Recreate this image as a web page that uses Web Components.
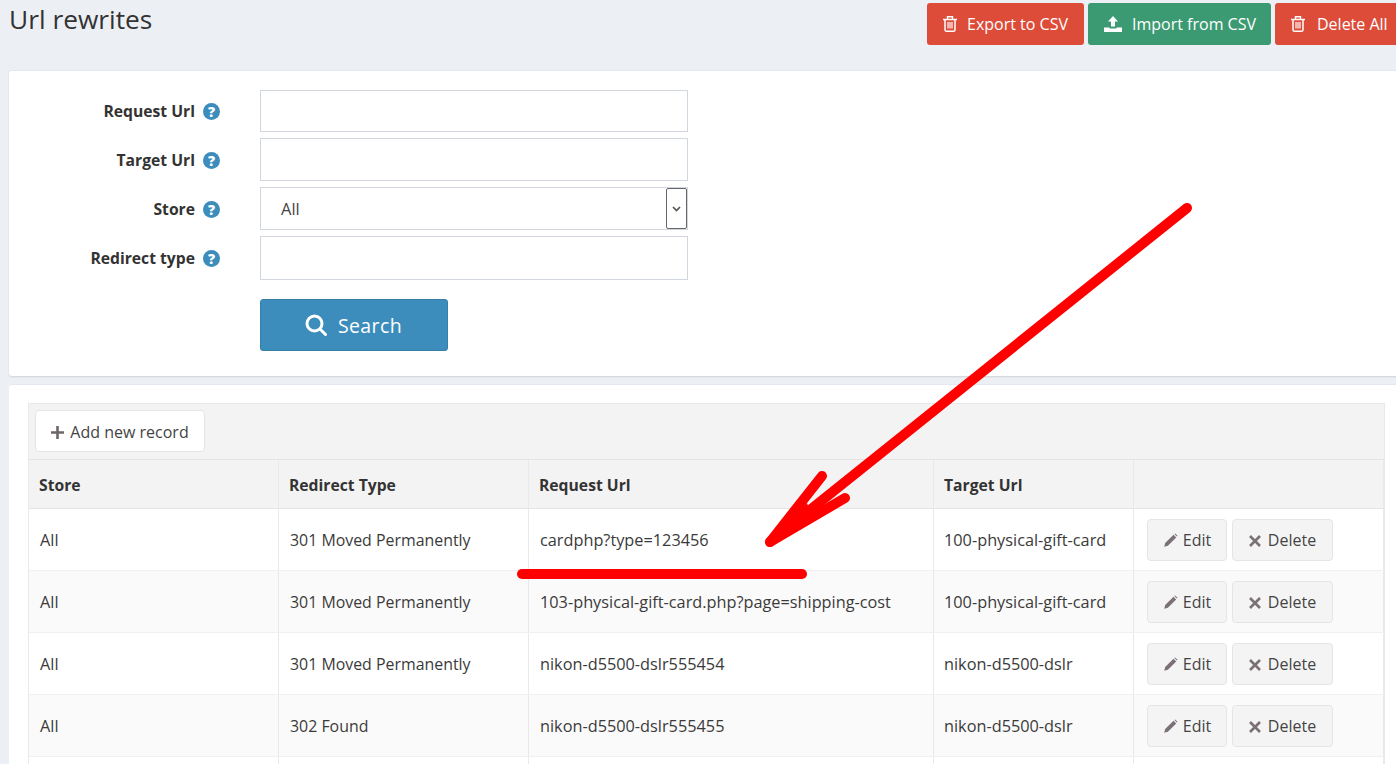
<!DOCTYPE html>
<html><head><meta charset="utf-8"><title>Url rewrites</title>
<style>
html,body{margin:0;height:764px;overflow:hidden;background:#ecf0f5}
body{font-family:"Open Sans","Liberation Sans",sans-serif;color:#333;position:relative}
</style></head><body>
<url-page>
  <page-header slot="header" title="Url rewrites">
    <ui-btn color="#dd4b39" icon="trash" style="width:157px">Export to CSV</ui-btn>
    <ui-btn color="#3c9a72" icon="upload" style="width:183px">Import from CSV</ui-btn>
    <ui-btn color="#dd4b39" icon="trash" style="width:129px;--gap:12px">Delete All</ui-btn>
  </page-header>
  <search-panel slot="search"></search-panel>
  <data-grid slot="grid"></data-grid>
</url-page>
<red-annotation></red-annotation>
<script>
const ICONS={
 trash:'<svg width="14" height="16" viewBox="0 0 14 16" fill="none" stroke="currentColor"><path d="M0 3.500h14" stroke-width="1.500"/><path d="M4.500 3V.8h5V3" stroke-width="1.400"/><path d="M2 3.500v10.300c0 .8.500 1.400 1.100 1.400h7.800c.6 0 1.100-.6 1.100-1.400V3.500" stroke-width="1.500"/><path d="M5 6v6.500M7 6v6.500M9 6v6.500" stroke-width="1.200"/></svg>',
 upload:'<svg width="18" height="16" viewBox="0 0 18 16" fill="currentColor"><path d="M9 0l5 5.500h-3v5H7v-5H4z"/><path d="M0 11.500h5.500v1h7v-1H18V16H0z"/></svg>',
 search:'<svg width="22" height="22" viewBox="0 0 22 22" fill="none" stroke="currentColor" stroke-width="3"><circle cx="9.500" cy="9.500" r="7.500"/><path d="M15 15l5.500 5.500" stroke-linecap="round"/></svg>',
 plus:'<svg width="13" height="13" viewBox="0 0 13 13" fill="currentColor"><path d="M5.200 0h2.600v5.200H13v2.600H7.800V13H5.200V7.800H0V5.200h5.200z"/></svg>',
 pencil:'<svg width="15" height="15" viewBox="0 0 15 15" fill="currentColor" style="margin-top:2px"><path d="M10.500 1.800l2.700 2.700-8.300 8.300-3.700 1 1-3.700z"/><path d="M11.400 1l.8-.5 2.300 2.300-.6.800z"/></svg>',
 x:'<svg width="12" height="12" viewBox="0 0 12 12" fill="none" stroke="currentColor" stroke-width="2.600" style="margin-top:2px"><path d="M1 1l10 10M11 1L1 11"/></svg>'
};
function def(name,css,html){
  customElements.define(name,class extends HTMLElement{
    connectedCallback(){
      if(this.shadowRoot)return;
      const r=this.attachShadow({mode:'open'});
      r.innerHTML='<style>'+css+'</style>'+(typeof html==='function'?html(this):html);
    }
  });
}
def('url-page',
 `:host{display:block;width:1395px;margin-left:9px}
  .stack{display:flex;flex-direction:column}`,
 `<div class="stack"><slot name="header"></slot><slot name="search"></slot><slot name="grid"></slot></div>`);
def('page-header',
 `:host{display:flex;height:70px;justify-content:space-between;align-items:flex-start}
  h1{margin:0;font-size:26.300px;font-weight:400;line-height:38px;color:#333}
  .b{display:flex;gap:4px;padding-top:3px}`,
 h=>`<h1>${h.getAttribute('title')}</h1><div class="b"><slot></slot></div>`);
def('ui-btn',
 `:host{display:flex;box-sizing:border-box;height:42px;align-items:center;border-radius:3px;color:#fff;font-size:16px;padding:0 15px 0 16px;gap:var(--gap,10px);white-space:nowrap}
  svg{display:block}`,
 h=>{h.style.background=h.getAttribute('color');return ICONS[h.getAttribute('icon')]+'<slot></slot>'});
def('form-row',
 `:host{display:grid;grid-template-columns:211px 1fr;column-gap:40px;align-items:center}
  .l{display:flex;justify-content:flex-end;align-items:center;gap:8px;font-weight:700;font-size:15.700px;color:#333;padding-top:var(--lp,1px)}
  .l span:first-child{margin-top:-1px}
  .q{width:17px;height:17px;border-radius:50%;background:#3c8dbc;color:#fff;font:800 14px/17px "Open Sans",sans-serif;text-align:center}`,
 h=>`<div class="l"><span>${h.getAttribute('label')}</span><span class="q">?</span></div><div><slot></slot></div>`);
def('text-box',
 `:host{display:block;box-sizing:border-box;width:428px;background:#fff;border:1px solid #d2d6de}`,'');
def('select-box',
 `:host{display:flex;box-sizing:border-box;width:428px;height:43px;background:#fff;border:1px solid #d2d6de;align-items:center;justify-content:space-between;font-size:16.500px;color:#444;padding-left:20px}
  .t{margin-top:-1px}
  .c{box-sizing:border-box;width:21px;height:41px;border:1px solid #666;border-radius:2px;display:flex;align-items:center;justify-content:center;color:#555}`,
 `<span class="t">All</span><span class="c"><svg width="9" height="6" viewBox="0 0 9 6" fill="none" stroke="currentColor" stroke-width="1.700"><path d="M1 1l3.500 3.500L8 1"/></svg></span>`);
def('search-panel',
 `:host{display:block;box-sizing:border-box;height:306px;background:#fff;border-radius:3px;border-top:1px solid #e4e8f0;box-shadow:0 1px 2px rgba(0,0,0,.12);padding-top:19px}
  .f{display:flex;flex-direction:column}
  .go{display:flex;box-sizing:border-box;width:188px;height:52px;margin:19px 0 0 251px;background:#3c8dbc;border:1px solid #367fa9;border-radius:3px;color:#fff;align-items:center;justify-content:center;gap:11px;font-size:19.500px;letter-spacing:.4px;padding-right:1px}
  svg{display:block}`,
 `<div class="f">
   <form-row label="Request Url" style="--lp:0px"><text-box style="height:42px"></text-box></form-row>
   <form-row label="Target Url" style="margin-top:6px"><text-box style="height:43px"></text-box></form-row>
   <form-row label="Store" style="margin-top:6px"><select-box></select-box></form-row>
   <form-row label="Redirect type" style="margin-top:6px;--lp:0px"><text-box style="height:44px"></text-box></form-row>
   <div class="go">${ICONS.search}<span>Search</span></div>
 </div>`);
def('grid-row',
 `:host{display:grid;grid-template-columns:250px 250px 405px 200px 1fr;border-bottom:1px solid #f0f0f0;box-sizing:border-box;height:62px;font-size:16.300px;color:#3a3a3a;background:var(--bg,#fff)}
  :host([head]){height:49px;--bg:#f3f3f3;font-weight:700;font-size:15.700px;border-bottom:1px solid #e4e4e4;color:#333;--pt:2px}
  ::slotted(*){display:flex;align-items:center;padding-left:10px;padding-top:var(--pt,0);border-right:1px solid #e9e9e9;min-width:0;white-space:nowrap}`,
 `<slot></slot>`);
def('row-btn',
 `:host{display:inline-flex;box-sizing:border-box;height:42px;align-items:center;justify-content:center;gap:var(--gap,5px);background:#f4f4f4;border:1px solid #e5e5e5;border-radius:4px;font-size:16px;color:#444}
  svg{display:block;color:#7a7075}`,
 h=>ICONS[h.getAttribute('icon')]+'<slot></slot>');
def('data-grid',
 `:host{display:block;box-sizing:border-box;margin-top:8px;height:500px;background:#fff;border-radius:3px;border-top:1px solid #e4e8f0;padding:18px 19px 0}
  .t{border:1px solid #e9e9e9;border-top:0}
  .tb{height:57px;box-sizing:border-box;background:#f3f3f3;padding:6px 6px;border-bottom:1px solid #e4e4e4;border-top:1px solid #e9e9e9}
  .add{display:inline-flex;box-sizing:border-box;width:170px;height:42px;padding-top:1px;align-items:center;justify-content:center;gap:6px;background:#fff;border:1px solid #e5e5e5;border-radius:4px;font-size:16px;color:#444}
  .add svg{color:#6e666a;display:block;margin-top:1px}`,
 `<div class="t"><div class="tb"><div class="add">${ICONS.plus}<span>Add new record</span></div></div>
  <grid-row head><div>Store</div><div>Redirect Type</div><div>Request Url</div><div>Target Url</div><div></div></grid-row>
  ${[['All','301 Moved Permanently','cardphp?type=123456','100-physical-gift-card'],
     ['All','301 Moved Permanently','103-physical-gift-card.php?page=shipping-cost','100-physical-gift-card'],
     ['All','301 Moved Permanently','nikon-d5500-dslr555454','nikon-d5500-dslr'],
     ['All','302 Found','nikon-d5500-dslr555455','nikon-d5500-dslr'],
     ['','','','']].map((r,i)=>`<grid-row style="--bg:${i%2?'#fafafa':'#fff'}"><div style="padding-left:11px">${r[0]}</div><div style="padding-left:11px;font-size:15.900px">${r[1]}</div><div style="padding-left:11px">${r[2]}</div><div>${r[3]}</div><div style="display:flex;gap:5px;padding-left:13px;align-items:center">${c0(r[0])}</div></grid-row>`).join('')}
 </div>`);
function c0(a){return a?'<row-btn icon="pencil" style="width:80px">Edit</row-btn><row-btn icon="x" style="width:101px;--gap:7px">Delete</row-btn>':''}
def('red-annotation',
 `:host{position:absolute;left:0;top:0;width:1396px;height:764px;pointer-events:none}
  svg{display:block}`,
 `<svg width="1396" height="764" viewBox="0 0 1396 764" fill="none" stroke="#f00" stroke-linecap="round" stroke-linejoin="round">
   <path d="M1187 208L770 542" stroke-width="10"/>
   <path d="M822 476L770 542L845 498" stroke-width="10"/>
   <path d="M807 503L770 542L812 517z" fill="#f00" stroke="none"/>
   <path d="M522 574H802" stroke-width="10"/>
 </svg>`);
</script>
</body></html>
